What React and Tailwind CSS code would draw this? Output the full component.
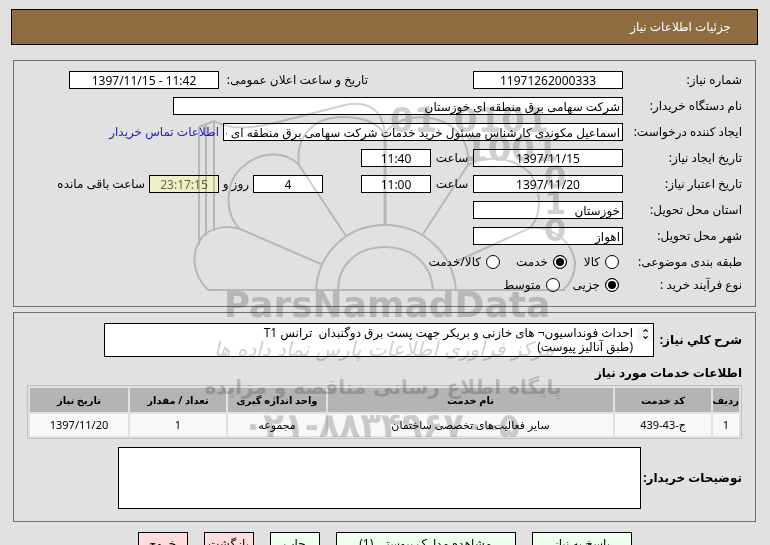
import { ChevronDown, ChevronUp } from "lucide-react";

const boxClass = "h-[18px] shrink-0 border border-black bg-white px-0.5 text-black outline-none";

function Field({ id, label, children }) {
    return (
        <div className="flex h-[18px] items-center">
            <label htmlFor={id} className="w-[119px] shrink-0 whitespace-nowrap">{label}</label>
            {children}
        </div>
    );
}

function Radio({ name, label, className = "", ...props }) {
    return (
        <label className={`flex shrink-0 items-center gap-[5px] whitespace-nowrap ${className}`}>
            <input
                type="radio"
                name={name}
                className="size-[14px] shrink-0 appearance-none rounded-full border border-black bg-white checked:bg-black checked:shadow-[inset_0_0_0_2px_white]"
                {...props}
            />
            {label}
        </label>
    );
}

function Watermark() {
    return (
        <svg
            width="400"
            height="360"
            viewBox="185 90 400 360"
            fill="none"
            stroke="#d0d0d0"
            strokeWidth="2"
            aria-hidden="true"
            className="pointer-events-none absolute top-[90px] left-1/2 -translate-x-1/2 mix-blend-multiply"
        >
            {/* wheel and petals */}
            <path d="M208 290H565" />
            <path d="M316 290C318 254 346 225 385 225C424 225 453 254 456 290M338 290C338 266 356 247 385 247C414 247 432 266 433 290" />
            <path d="M208 290C190 272 191 248 205 234C215 227 228 225 240 229L321 264" />
            <path d="M240 229C224 215 224 180 245 165C260 152 285 150 299 165L346 236" />
            <path d="M299 165C295 135 315 118 340 117C365 117 378 123 385 135" />
            <path d="M385 135V225" strokeWidth="3" />
            <path d="M385 135C390 122 410 115 430 118C455 122 470 140 468 165L423 234" />
            <path d="M468 165C485 156 510 155 530 173C542 190 542 215 530 228L455 262" />
            <path d="M530 228C550 226 572 240 575 262C575 275 570 284 563 290" />

            {/* tower */}
            <path d="M199 245V127M206 236V124M214 231V121M199 127L214 121C230 130 250 130 290 119L345 105C365 101 383 107 385 135" />

            <g stroke="none" fill="#d0d0d0" direction="ltr" className="font-['DejaVu_Sans'] font-bold">
                <text x="390" y="132" fontSize="34">01</text>
                <text x="454" y="132" fontSize="34">0101</text>
                <text x="464" y="161" fontSize="34">1001</text>
                <text x="544" y="188" fontSize="32">0</text>
                <text x="544" y="214" fontSize="32">1</text>
                <text x="544" y="241" fontSize="32">0</text>
            </g>
            <g stroke="none" fill="#d0d0d0" textAnchor="middle" className="font-['DejaVu_Sans'] font-bold">
                <text x="387" y="317" fontSize="36" direction="ltr">ParsNamadData</text>
                <text x="384" y="356" fontSize="20" direction="rtl" className="font-normal italic">مرکز فرآوری اطلاعات پارس نماد داده ها</text>
                <text x="383" y="394" fontSize="20" direction="rtl">پایگاه اطلاع رسانی مناقصه و مزایده</text>
                <text x="381" y="437" fontSize="34" direction="ltr">۰۲۱-۸۸۳۴۹۶۷۰-۵</text>
            </g>
        </svg>
    );
}

export default function App() {
    return (
        <main
            dir="rtl"
            className="relative min-h-screen overflow-hidden bg-[#e1e1e1] pt-[9px] pr-3 pl-[11px] font-['Noto_Sans','DejaVu_Sans',sans-serif] text-[12px] leading-4 text-black"
        >
            <h1 className="flex h-9 items-center border border-black bg-[#8f6c40] px-[26px] text-white">جزئیات اطلاعات نیاز</h1>

            {/* Request info */}
            <section className="mx-0.5 mt-[15px] flex h-[247px] flex-col gap-2 border border-[#707070] px-[13px] pt-[10px]">
                <Field id="number" label="شماره نیاز:">
                    <input id="number" readOnly defaultValue="11971262000333" className={`w-[150px] text-center ${boxClass}`} />
                    <label htmlFor="announced" className="ms-[105px] w-[149px] shrink-0 whitespace-nowrap">تاریخ و ساعت اعلان عمومی:</label>
                    <input id="announced" dir="ltr" readOnly defaultValue="1397/11/15 - 11:42" className={`w-[150px] text-center ${boxClass}`} />
                </Field>
                <Field id="buyer" label="نام دستگاه خریدار:">
                    <input id="buyer" readOnly defaultValue="شرکت سهامی برق منطقه ای خوزستان" className={`w-[450px] ${boxClass}`} />
                </Field>
                <Field id="creator" label="ایجاد کننده درخواست:">
                    <input id="creator" readOnly defaultValue="اسماعیل مکوندی کارشناس مسئول خرید خدمات شرکت سهامی برق منطقه ای خوزستان" className={`w-[400px] ${boxClass}`} />
                    <a href="#contact" className="ms-1 whitespace-nowrap text-[#2222bb]">اطلاعات تماس خریدار</a>
                </Field>
                <Field id="created" label="تاریخ ایجاد نیاز:">
                    <input id="created" readOnly defaultValue="1397/11/15" className={`w-[150px] text-center ${boxClass}`} />
                    <label htmlFor="created-time" className="w-[42px] shrink-0 text-center">ساعت</label>
                    <input id="created-time" readOnly defaultValue="11:40" className={`w-[70px] text-center ${boxClass}`} />
                </Field>
                <Field id="valid" label="تاریخ اعتبار نیاز:">
                    <input id="valid" readOnly defaultValue="1397/11/20" className={`w-[150px] text-center ${boxClass}`} />
                    <label htmlFor="valid-time" className="w-[42px] shrink-0 text-center">ساعت</label>
                    <input id="valid-time" readOnly defaultValue="11:00" className={`w-[70px] text-center ${boxClass}`} />
                    <input id="days" readOnly defaultValue="4" className={`ms-[38px] w-[70px] text-center ${boxClass}`} />
                    <label htmlFor="days" className="w-[34px] shrink-0 ps-1 whitespace-nowrap">روز و</label>
                    <input id="remaining" readOnly defaultValue="23:17:15" className="h-[18px] w-[70px] shrink-0 border border-black bg-[#f0f0c8] px-0.5 text-center text-[#666644] outline-none" />
                    <label htmlFor="remaining" className="ms-1 whitespace-nowrap">ساعت باقی مانده</label>
                </Field>
                <Field id="province" label="استان محل تحویل:">
                    <input id="province" readOnly defaultValue="خوزستان" className={`w-[150px] ${boxClass}`} />
                </Field>
                <Field id="city" label="شهر محل تحویل:">
                    <input id="city" readOnly defaultValue="اهواز" className={`w-[150px] ${boxClass}`} />
                </Field>
                <div className="flex h-[18px] items-center" role="radiogroup" aria-labelledby="subject">
                    <span id="subject" className="w-[123px] shrink-0">طبقه بندی موضوعی:</span>
                    <Radio name="subject" label="کالا" className="w-[52px]" />
                    <Radio name="subject" label="خدمت" className="w-[67px]" defaultChecked />
                    <Radio name="subject" label="کالا/خدمت" />
                </div>
                <div className="-mt-[3px] flex h-[18px] items-center" role="radiogroup" aria-labelledby="process">
                    <span id="process" className="w-[123px] shrink-0">نوع فرآیند خرید :</span>
                    <Radio name="process" label="جزیی" className="w-[59px]" defaultChecked />
                    <Radio name="process" label="متوسط" />
                </div>
            </section>

            {/* Services */}
            <section className="mx-0.5 mt-[5px] border border-[#707070] px-[13px] pt-[10px] pb-3">
                <div className="flex items-center">
                    <label htmlFor="summary" className="w-[88px] shrink-0 font-bold whitespace-nowrap">شرح کلي نیاز:</label>
                    <div className="relative h-[34px] w-[550px]">
                        <textarea
                            id="summary"
                            readOnly
                            rows={2}
                            defaultValue={"احداث فونداسیون¬ های خازنی و بریکر جهت پست برق دوگنبدان  ترانس T1\n(طبق آنالیز پیوست)"}
                            className="block h-full w-full resize-none overflow-hidden border border-black bg-white pt-0.5 pr-5 leading-[14px] outline-none"
                        />
                        {/* scroll arrows */}
                        <span className="absolute top-1 right-px flex w-4 flex-col items-center bg-[#f4f4f4]">
                            <ChevronUp size={7} strokeWidth={4} />
                            <ChevronDown size={7} strokeWidth={4} />
                        </span>
                    </div>
                </div>
                <h2 className="mt-2 font-bold">اطلاعات خدمات مورد نیاز</h2>
                <table className="mt-1 w-full table-fixed border-separate border-spacing-0.5 border border-[#c0c0c0] text-center text-[11px]">
                    <thead>
                        <tr className="h-6 bg-[#b4b4b4] text-[10px]">
                            <th className="w-[26px]">ردیف</th>
                            <th className="w-24">کد خدمت</th>
                            <th>نام خدمت</th>
                            <th className="w-[98px]">واحد اندازه گیری</th>
                            <th className="w-24">تعداد / مقدار</th>
                            <th className="w-[98px]">تاریخ نیاز</th>
                        </tr>
                    </thead>
                    <tbody>
                        <tr className="h-[22px] bg-[#f8f8f8]">
                            <td>1</td>
                            <td>ج-43-439</td>
                            <td>سایر فعالیت‌های تخصصی ساختمان</td>
                            <td>مجموعه</td>
                            <td>1</td>
                            <td>1397/11/20</td>
                        </tr>
                    </tbody>
                </table>
                <div className="mt-2 flex items-center">
                    <label htmlFor="notes" className="w-[101px] shrink-0 font-bold whitespace-nowrap">توضیحات خریدار:</label>
                    <textarea id="notes" readOnly className="h-[62px] w-[523px] resize-none border border-black bg-white outline-none" />
                </div>
            </section>

            {/* Actions */}
            <div className="mt-[10px] flex justify-center gap-4">
                <button className="h-6 w-[100px] border border-black bg-[#eeffee]">پاسخ به نیاز</button>
                <button className="h-6 w-[180px] border border-black bg-[#eeffee]">مشاهده مدارک پیوستی (1)</button>
                <button className="h-6 w-[50px] border border-black bg-[#eeffee]">چاپ</button>
                <button className="h-6 w-[50px] border border-black bg-[#ffdddd]">بازگشت</button>
                <button className="h-6 w-[50px] border border-black bg-[#ffdddd]">خروج</button>
            </div>

            <Watermark />
        </main>
    );
}
